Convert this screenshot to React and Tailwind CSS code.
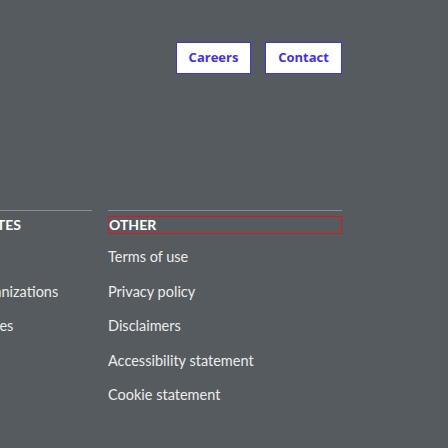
import React from "react";

const otherLinks = [
  "Terms of use",
  "Privacy policy",
  "Disclaimers",
  "Accessibility statement",
  "Cookie statement",
];

const relatedLinks = ["Ministries", "Non-governmental organizations", "Embassies and consulates"];

const FooterColumn = ({ title, links, focused, width }) => (
  <div className={`${width} shrink-0 border-t border-[#8a8e91]`}>
    <h3
      className={`mt-[5px] h-[18px] flex items-center text-[14px] font-bold uppercase text-white leading-none ${
        focused ? "border border-[#e0141e]" : "border border-transparent"
      }`}
    >
      {title}
    </h3>
    <ul className="mt-[13px] flex flex-col gap-[14.5px] text-[14.5px] text-[#ececec]">
      {links.map((link) => (
        <li key={link} className="h-5 flex items-center whitespace-nowrap">
          {link}
        </li>
      ))}
    </ul>
  </div>
);

export default function App() {
  return (
    <div
      className="w-[448px] h-[448px] overflow-hidden bg-[#565b5f]"
      style={{ fontFamily: "Lato, 'Noto Sans', sans-serif" }}
    >
      <div className="pt-[42px] pr-[106px] flex justify-end gap-[14px]">
        <button
          className="h-[32px] w-[75px] bg-white border border-[#3f30f2] text-[#3f30f2] text-[13px] font-bold"
          style={{ fontFamily: "'Open Sans', sans-serif" }}
        >
          Careers
        </button>
        <button
          className="h-[32px] w-[77px] bg-white border border-[#3f30f2] text-[#3f30f2] text-[13px] font-bold"
          style={{ fontFamily: "'Open Sans', sans-serif" }}
        >
          Contact
        </button>
      </div>

      <div className="mt-[136px] pr-[106px] flex justify-end gap-[16px]">
        <FooterColumn title="Government websites" links={relatedLinks} width="w-[242px]" />
        <FooterColumn title="Other" links={otherLinks} focused width="w-[234px]" />
      </div>
    </div>
  );
}
